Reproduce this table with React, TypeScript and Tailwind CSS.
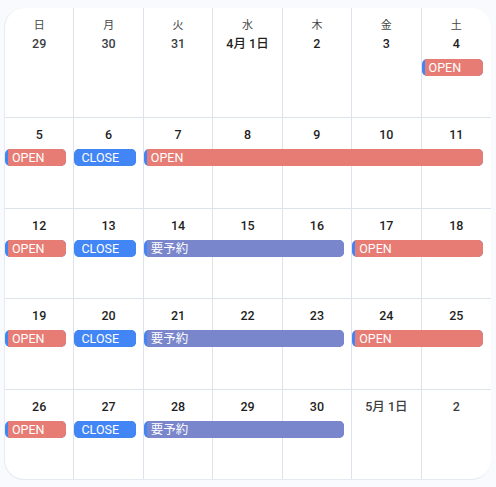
import React from 'react';

type Kind = 'open' | 'close' | 'reserve';

interface CalEvent {
  col: number;
  span: number;
  kind: Kind;
}

interface Day {
  label: string;
  inMonth: boolean;
}

const WEEKDAYS = ['日', '月', '火', '水', '木', '金', '土'];

const COL_START = ['col-start-1', 'col-start-2', 'col-start-3', 'col-start-4', 'col-start-5', 'col-start-6', 'col-start-7'];
const COL_SPAN = ['col-span-1', 'col-span-2', 'col-span-3', 'col-span-4', 'col-span-5', 'col-span-6', 'col-span-7'];

const d = (label: string, inMonth = true): Day => ({ label, inMonth });

const weeks: { days: Day[]; events: CalEvent[] }[] = [
  {
    days: [d('29', false), d('30', false), d('31', false), d('4月 1日'), d('2'), d('3'), d('4')],
    events: [{ col: 6, span: 1, kind: 'open' }],
  },
  {
    days: [d('5'), d('6'), d('7'), d('8'), d('9'), d('10'), d('11')],
    events: [
      { col: 0, span: 1, kind: 'open' },
      { col: 1, span: 1, kind: 'close' },
      { col: 2, span: 5, kind: 'open' },
    ],
  },
  {
    days: [d('12'), d('13'), d('14'), d('15'), d('16'), d('17'), d('18')],
    events: [
      { col: 0, span: 1, kind: 'open' },
      { col: 1, span: 1, kind: 'close' },
      { col: 2, span: 3, kind: 'reserve' },
      { col: 5, span: 2, kind: 'open' },
    ],
  },
  {
    days: [d('19'), d('20'), d('21'), d('22'), d('23'), d('24'), d('25')],
    events: [
      { col: 0, span: 1, kind: 'open' },
      { col: 1, span: 1, kind: 'close' },
      { col: 2, span: 3, kind: 'reserve' },
      { col: 5, span: 2, kind: 'open' },
    ],
  },
  {
    days: [d('26'), d('27'), d('28'), d('29'), d('30'), d('5月 1日', false), d('2', false)],
    events: [
      { col: 0, span: 1, kind: 'open' },
      { col: 1, span: 1, kind: 'close' },
      { col: 2, span: 3, kind: 'reserve' },
    ],
  },
];

const KIND_STYLE: Record<Kind, { text: string; bg: string }> = {
  open: { text: 'OPEN', bg: 'bg-[#e67c73]' },
  close: { text: 'CLOSE', bg: 'bg-[#4285f4]' },
  reserve: { text: '要予約', bg: 'bg-[#7986cb]' },
};

const EventBar: React.FC<{ ev: CalEvent }> = ({ ev }) => {
  const style = KIND_STYLE[ev.kind];
  return (
    <div
      className={`${COL_START[ev.col]} ${COL_SPAN[ev.span - 1]} row-start-2 self-start mr-2 h-[17px] rounded-[5px] bg-[#4285f4] overflow-hidden z-10`}
    >
      <div className={`ml-[3px] h-full ${style.bg} pl-1 text-[12.5px] leading-[17px] text-white whitespace-nowrap`}>
        {style.text}
      </div>
    </div>
  );
};

const App: React.FC = () => {
  return (
    <div
      className="w-[496px] h-[487px] bg-[#f8fafd] pt-2 pl-1 pr-[5px] pb-[7px]"
      style={{ fontFamily: 'Roboto, "Noto Sans CJK JP", sans-serif' }}
    >
      <div className="h-[472px] bg-white rounded-[20px] overflow-hidden flex flex-col border-l border-b border-[#e6ebf1]">
        {weeks.map((week, wi) => {
          const first = wi === 0;
          const last = wi === weeks.length - 1;
          return (
            <div
              key={wi}
              className={`grid grid-cols-7 ${first ? 'h-[110px] grid-rows-[51px_1fr]' : 'flex-1 grid-rows-[31px_1fr]'} ${last ? '' : 'border-b border-[#dde3ea]'}`}
            >
              {week.days.map((day, di) => (
                <div
                  key={di}
                  className={`${COL_START[di]} row-start-1 row-span-2 flex flex-col items-center ${first ? 'pt-[10px]' : 'pt-[9px]'} ${di < 6 ? 'border-r border-[#dde3ea]' : ''}`}
                >
                  {first && (
                    <div className="h-4 text-[11px] leading-4 text-[#444746]">{WEEKDAYS[di]}</div>
                  )}
                  <div
                    className={`${first ? 'mt-[2px]' : ''} h-4 text-[12.5px] leading-4 font-medium ${day.inMonth ? 'text-[#1f1f1f]' : 'text-[#3c4043]'}`}
                  >
                    {day.label}
                  </div>
                </div>
              ))}
              {week.events.map((ev, ei) => (
                <EventBar key={ei} ev={ev} />
              ))}
            </div>
          );
        })}
      </div>
    </div>
  );
};

export default App;
